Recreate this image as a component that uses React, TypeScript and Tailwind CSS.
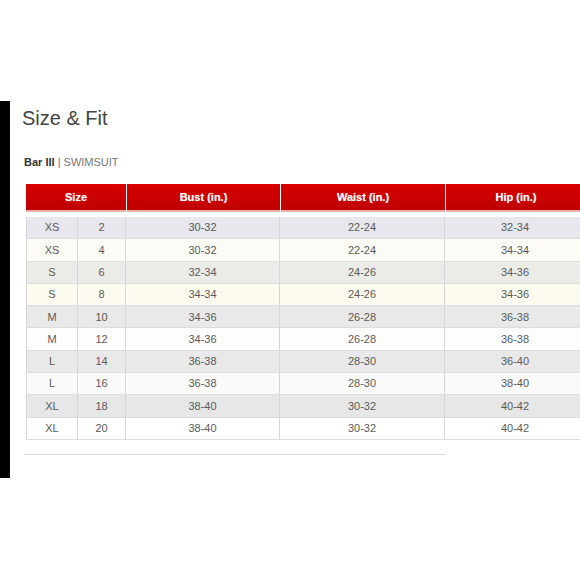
const ROWS = [
  { s: "XS", n: "2", bust: "30-32", waist: "22-24", hip: "32-34", bg: "bg-[#e7e7ed]" },
  { s: "XS", n: "4", bust: "30-32", waist: "22-24", hip: "34-34", bg: "bg-[#fcfbf6]" },
  { s: "S", n: "6", bust: "32-34", waist: "24-26", hip: "34-36", bg: "bg-[#ebebe7]" },
  { s: "S", n: "8", bust: "34-34", waist: "24-26", hip: "34-36", bg: "bg-[#fdfbef]" },
  { s: "M", n: "10", bust: "34-36", waist: "26-28", hip: "36-38", bg: "bg-[#e9e9e9]" },
  { s: "M", n: "12", bust: "34-36", waist: "26-28", hip: "36-38", bg: "bg-[#fdfdfd]" },
  { s: "L", n: "14", bust: "36-38", waist: "28-30", hip: "36-40", bg: "bg-[#e9e9e9]" },
  { s: "L", n: "16", bust: "36-38", waist: "28-30", hip: "38-40", bg: "bg-[#fafafa]" },
  { s: "XL", n: "18", bust: "38-40", waist: "30-32", hip: "40-42", bg: "bg-[#e7e7e7]" },
  { s: "XL", n: "20", bust: "38-40", waist: "30-32", hip: "40-42", bg: "bg-[#ffffff]" },
];

const COLS = "grid grid-cols-[52px_48px_154px_165px_140px]";

export default function App() {
  return (
    <div className="flex h-[580px] w-[580px] overflow-hidden bg-white font-['Liberation_Sans',Arial,sans-serif]">
      {/* left black edge */}
      <div className="mt-[101px] h-[377px] w-[10px] shrink-0 bg-black" />

      <div className="flex flex-col pl-[12px] pt-[106px]">
        <h1 className="text-[20px] leading-[24px] text-[#444]">Size &amp; Fit</h1>
        <p className="mt-[26px] pl-[2px] text-[11px] leading-[13px] text-[#777]">
          <span className="font-bold text-[#333]">Bar III</span> | SWIMSUIT
        </p>

        <div className="ml-[4px] mt-[15px] w-[559px]">
          {/* header */}
          <div className="grid h-[28px] grid-cols-[100px_153px_164px_140px] gap-x-px bg-white text-[11px] font-bold text-white [text-shadow:0_0_1px_rgba(255,200,200,0.6)]">
            {["Size", "Bust (in.)", "Waist (in.)", "Hip (in.)"].map((h) => (
              <div
                key={h}
                className="flex items-center justify-center border-b-2 border-[#e9b0b0] bg-gradient-to-b from-[#d80000] to-[#bf0000]"
              >
                {h}
              </div>
            ))}
          </div>

          {/* body */}
          <div className="mt-[5px] text-[11px] text-[#5a5a5a]">
            {ROWS.map((r, i) => (
              <div key={i} className={`${COLS} h-[22.3px] border-b border-[#dcdcdc] ${r.bg}`}>
                <div className="flex items-center justify-center border-l border-r border-[#d6d6d6]">{r.s}</div>
                <div className="flex items-center justify-center border-r border-[#d6d6d6]">{r.n}</div>
                <div className="flex items-center justify-center border-r border-[#d6d6d6]">{r.bust}</div>
                <div className="flex items-center justify-center border-r border-[#d6d6d6]">{r.waist}</div>
                <div className="flex items-center justify-center">{r.hip}</div>
              </div>
            ))}
          </div>

          <div className="-ml-[2px] mt-[14px] h-px w-[422px] bg-[#dadada]" />
        </div>
      </div>
    </div>
  );
}
